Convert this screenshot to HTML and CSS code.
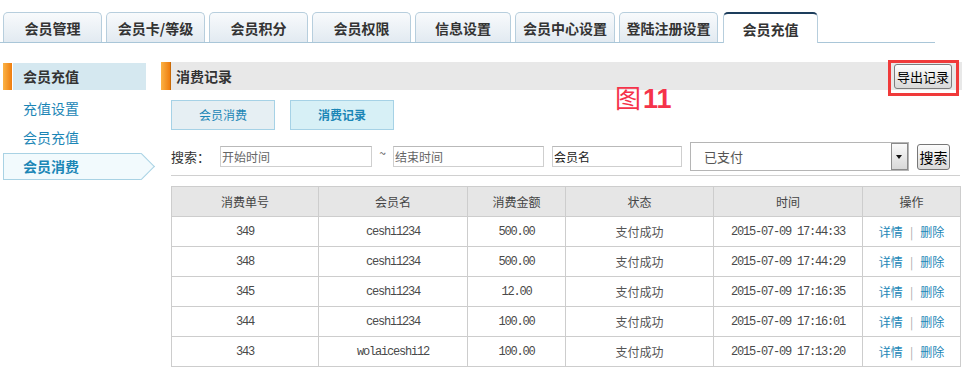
FILE: index.html
```html
<!DOCTYPE html>
<html lang="zh-CN">
<head>
  <meta charset="UTF-8" />
  <title>会员充值 - 消费记录</title>
  <link rel="stylesheet" href="styles.css">
</head>
<body>
  <div class="tabs">
    <a class="tab">会员管理</a>
    <a class="tab">会员卡/等级</a>
    <a class="tab">会员积分</a>
    <a class="tab">会员权限</a>
    <a class="tab tab-sm">信息设置</a>
    <a class="tab tab-lg">会员中心设置</a>
    <a class="tab">登陆注册设置</a>
    <a class="tab tab-on">会员充值</a>
  </div>

  <div class="layout">
    <aside class="side">
      <div class="side-title">会员充值</div>
      <ul class="side-menu">
        <li>充值设置</li>
        <li>会员充值</li>
        <li class="on">会员消费</li>
      </ul>
    </aside>

    <main class="content">
      <div class="panel-head">消费记录</div>
      <div class="mark-box"><button class="btn-export">导出记录</button></div>
      <div class="figure-no"><span class="fig-cn">图</span>11</div>

      <div class="sub-tabs">
        <a class="sub-tab">会员消费</a>
        <a class="sub-tab on">消费记录</a>
      </div>

      <div class="search">
        <span class="search-label">搜索：</span>
        <input class="field f-start" value="开始时间">
        <span class="tilde">~</span>
        <input class="field f-end" value="结束时间">
        <input class="field f-name" value="会员名">
        <div class="select">
          <span>已支付</span>
          <i class="select-arrow"></i>
        </div>
        <button class="btn-search">搜索</button>
      </div>

      <table class="grid">
        <thead>
          <tr>
            <th class="c1">消费单号</th>
            <th class="c2">会员名</th>
            <th class="c3">消费金额</th>
            <th class="c4">状态</th>
            <th class="c5">时间</th>
            <th class="c6">操作</th>
          </tr>
        </thead>
        <tbody>
          <tr>
            <td class="num">349</td><td class="num">ceshi1234</td><td class="num">500.00</td>
            <td>支付成功</td><td class="num">2015-07-09 17:44:33</td>
            <td><a>详情</a><span class="sep">|</span><a>删除</a></td>
          </tr>
          <tr>
            <td class="num">348</td><td class="num">ceshi1234</td><td class="num">500.00</td>
            <td>支付成功</td><td class="num">2015-07-09 17:44:29</td>
            <td><a>详情</a><span class="sep">|</span><a>删除</a></td>
          </tr>
          <tr>
            <td class="num">345</td><td class="num">ceshi1234</td><td class="num">12.00</td>
            <td>支付成功</td><td class="num">2015-07-09 17:16:35</td>
            <td><a>详情</a><span class="sep">|</span><a>删除</a></td>
          </tr>
          <tr>
            <td class="num">344</td><td class="num">ceshi1234</td><td class="num">100.00</td>
            <td>支付成功</td><td class="num">2015-07-09 17:16:01</td>
            <td><a>详情</a><span class="sep">|</span><a>删除</a></td>
          </tr>
          <tr>
            <td class="num">343</td><td class="num">wolaiceshi12</td><td class="num">100.00</td>
            <td>支付成功</td><td class="num">2015-07-09 17:13:20</td>
            <td><a>详情</a><span class="sep">|</span><a>删除</a></td>
          </tr>
        </tbody>
      </table>
    </main>
  </div>
</body>
</html>
```

FILE: styles.css
```css
body {
  margin: 0;
  background: #fff;
  color: #333;
  font-family: "Noto Sans CJK SC", "Liberation Sans", sans-serif;
  font-size: 12px;
}

/* top tabs */
.tabs {
  display: flex;
  gap: 4px;
  width: 932px;
  height: 30px;
  padding: 12px 0 0 3px;
  border-bottom: 1px solid #a9c6d8;
}
.tab {
  box-sizing: border-box;
  width: 99px;
  height: 30px;
  border: 1px solid #b7cedd;
  border-bottom: 0;
  border-radius: 5px 5px 0 0;
  background: linear-gradient(#f8fafc, #e2eaf1);
  display: flex;
  align-items: center;
  justify-content: center;
  font-size: 14px;
  font-weight: bold;
  color: #333;
}
.tab-sm {
  width: 96px;
}
.tab-lg {
  width: 100px;
}
.tab-on {
  width: 95px;
  height: 31px;
  margin-bottom: -1px;
  margin-left: 1px;
  border-top: 2px solid #1d3d5c;
  background: #fff;
}

.layout {
  display: flex;
  align-items: flex-start;
  padding-left: 3px;
}

/* left menu */
.side {
  width: 152px;
  margin: 20px 6px 0 0;
}
.side-title {
  width: 143px;
  height: 27px;
  line-height: 27px;
  box-sizing: border-box;
  padding-left: 20px;
  background: linear-gradient(90deg, #fbb346 0, #ee7d0e 9px, #fff 9px, #fff 10px, #d5e8f0 10px);
  font-size: 14px;
  font-weight: bold;
  color: #333;
}
.side-menu {
  list-style: none;
  margin: 4px 0 0;
  padding: 0;
}
.side-menu li {
  height: 29px;
  line-height: 29px;
  padding-left: 20px;
  font-size: 14px;
  color: #1b86b6;
}
.side-menu li.on {
  position: relative;
  width: 119px;
  height: 25px;
  line-height: 25px;
  margin-top: 1px;
  padding-left: 19px;
  border: 1px solid #a9d2e4;
  border-right: 0;
  background: #f2fafd;
  font-weight: bold;
}
.side-menu li.on::after {
  content: "";
  position: absolute;
  right: -9px;
  top: 3px;
  width: 18px;
  height: 18px;
  border-top: 1px solid #a9d2e4;
  border-right: 1px solid #a9d2e4;
  background: #f2fafd;
  transform: rotate(45deg);
}

/* content */
.content {
  position: relative;
  width: 801px;
  margin-top: 19px;
}
.panel-head {
  height: 28px;
  line-height: 28px;
  padding-left: 15px;
  background: linear-gradient(90deg, #fbb346 0, #ee7d0e 9px, #c96a08 9px, #c96a08 10px, #e8e8e8 10px);
  font-size: 14px;
  font-weight: bold;
  color: #333;
}
.mark-box {
  position: absolute;
  left: 727px;
  top: -2px;
  width: 65px;
  height: 30px;
  border: 3px solid #f03a3a;
}
.btn-export {
  position: absolute;
  left: 3px;
  top: 1px;
  width: 58px;
  height: 25px;
  padding: 0;
  border: 1px solid #7d7d7d;
  border-radius: 3px;
  background: linear-gradient(#fdfdfd, #d9d9d9);
  font-family: inherit;
  font-size: 13px;
  color: #000;
}
.figure-no {
  position: absolute;
  left: 454px;
  top: 22px;
  line-height: 1;
  font-family: "Liberation Sans", sans-serif;
  font-size: 27px;
  font-weight: bold;
  color: #f5334a;
}
.fig-cn {
  font-family: "Noto Sans CJK SC", sans-serif;
  font-weight: normal;
  font-size: 26px;
  margin-right: 2px;
}

.sub-tabs {
  display: flex;
  gap: 15px;
  margin: 10px 0 0 10px;
}
.sub-tab {
  box-sizing: border-box;
  width: 104px;
  height: 30px;
  line-height: 28px;
  text-align: center;
  border: 1px solid #a6d2e6;
  background: #e6eff3;
  color: #1b86b6;
}
.sub-tab.on {
  background: #d7f0f6;
  font-weight: bold;
}

.search {
  display: flex;
  align-items: center;
  width: 789px;
  height: 29px;
  margin: 12px 0 0 10px;
  padding-bottom: 4px;
  border-bottom: 1px solid #d0d0d0;
}
.search-label {
  width: 49px;
  font-size: 13px;
  color: #333;
}
.field {
  box-sizing: border-box;
  height: 21px;
  margin: 0;
  padding: 0 1px;
  border: 1px solid #cfcfcf;
  border-top-color: #b9b9b9;
  font-family: inherit;
  font-size: 12px;
  color: #666;
}
.f-start {
  width: 152px;
}
.tilde {
  width: 21px;
  align-self: flex-start;
  margin-top: 2px;
  text-align: center;
  font-size: 12px;
  color: #555;
}
.f-end {
  width: 151px;
  margin-right: 8px;
}
.f-name {
  width: 130px;
  margin-right: 8px;
  color: #222;
}
.select {
  position: relative;
  box-sizing: border-box;
  width: 219px;
  height: 29px;
  line-height: 27px;
  padding-left: 13px;
  margin-right: 8px;
  border: 1px solid #b5b5b5;
  font-size: 13px;
  color: #555;
}
.select-arrow {
  position: absolute;
  right: 0;
  top: 0;
  box-sizing: border-box;
  width: 17px;
  height: 27px;
  border: 1px solid #8a8a8a;
  background: linear-gradient(#fafafa, #d8d8d8);
}
.select-arrow::after {
  content: "";
  position: absolute;
  left: 4px;
  top: 11px;
  border-left: 3px solid transparent;
  border-right: 3px solid transparent;
  border-top: 4px solid #111;
}
.btn-search {
  box-sizing: border-box;
  width: 33px;
  height: 26px;
  padding: 0;
  border: 1px solid #777;
  border-radius: 3px;
  background: linear-gradient(#fdfdfd, #dadada);
  font-family: inherit;
  font-size: 14px;
  color: #000;
}

/* records table */
.grid {
  width: 790px;
  margin: 10px 0 0 10px;
  border-collapse: collapse;
  table-layout: fixed;
}
.grid th,
.grid td {
  height: 29px;
  padding: 0;
  border: 1px solid #cdcdcd;
  text-align: center;
}
.grid th {
  background: #e6e6e6;
  font-weight: normal;
  color: #444;
}
.grid td {
  color: #555;
}
.c1 { width: 146px; }
.c2 { width: 148px; }
.c3 { width: 97px; }
.c4 { width: 147px; }
.c5 { width: 148px; }
.c6 { width: 97px; }
.grid td.num {
  font-family: "Liberation Mono", monospace;
  font-size: 12px;
  letter-spacing: -1.2px;
  color: #4a4a4a;
}
.grid td a {
  color: #1b86b6;
}
.sep {
  margin: 0 7px;
  color: #aaa;
}
```
